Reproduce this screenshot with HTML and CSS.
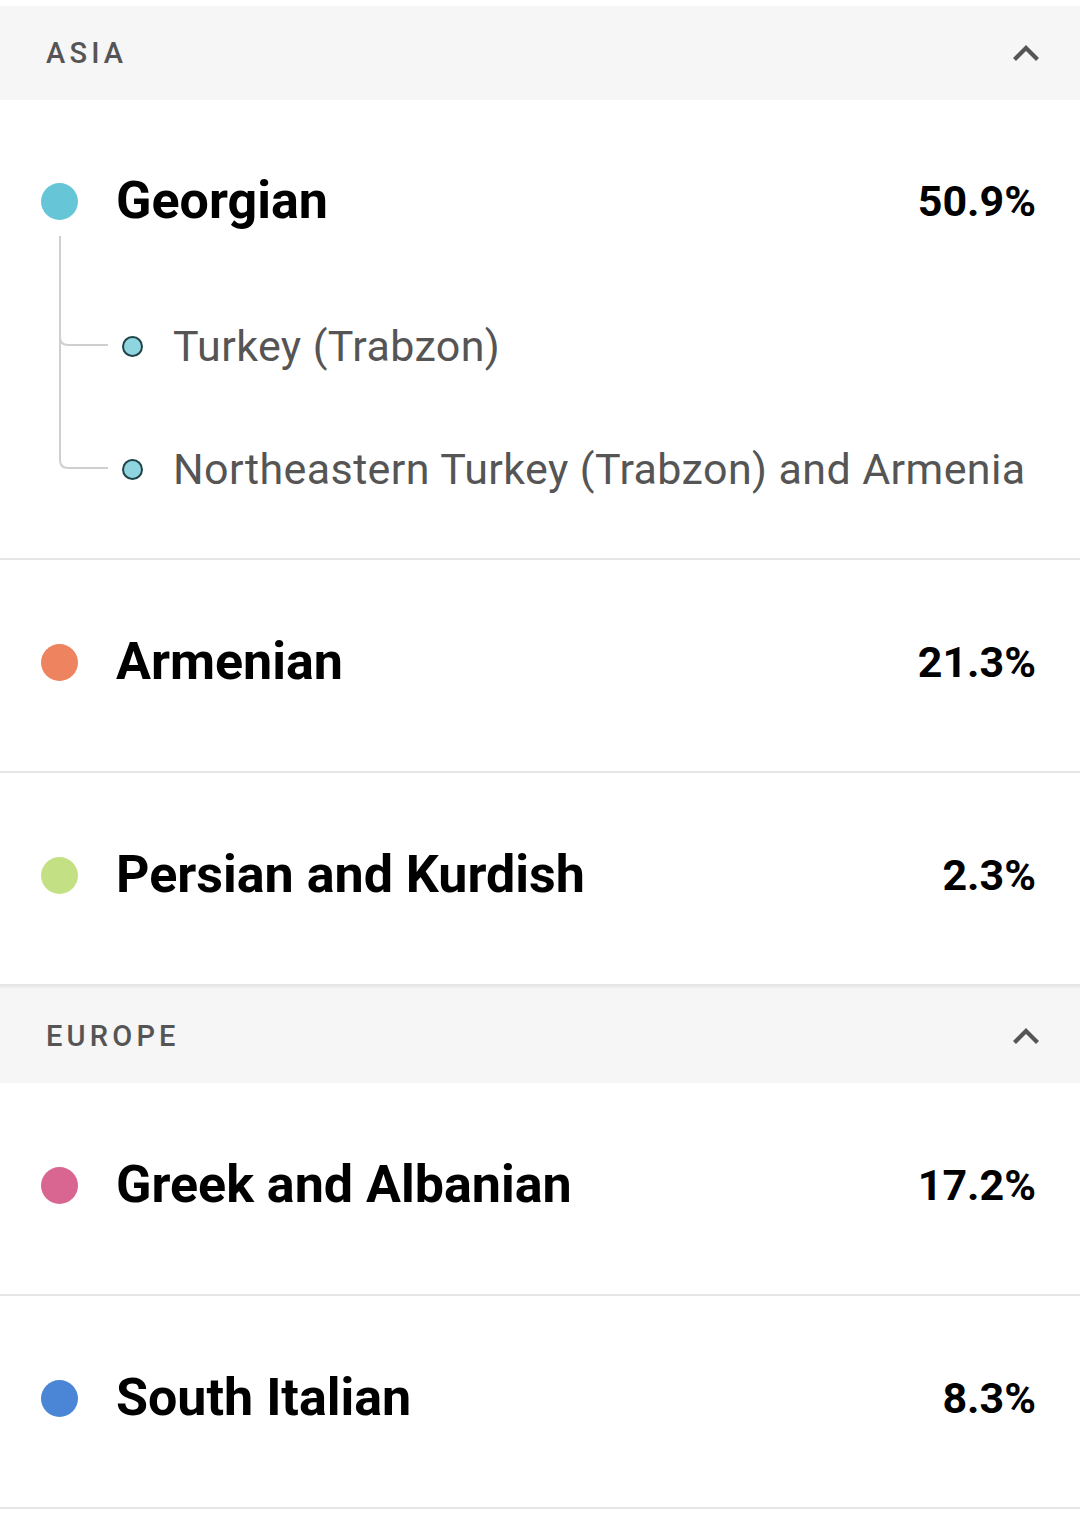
FILE: index.html
```html
<!DOCTYPE html>
<html lang="en">
<head>
<meta charset="utf-8">
<title>Ancestry</title>
<link rel="stylesheet" href="styles.css">
</head>
<body>
<div class="page">
  <section class="region">
    <header class="region-head">
      <span class="region-title">ASIA</span>
      <svg class="chevron" viewBox="0 0 28 18" width="28" height="18"><path d="M2.5 15.5 L14 4 L25.5 15.5" fill="none" stroke="#555" stroke-width="4.2"/></svg>
    </header>
    <div class="row row-tree">
      <div class="main">
        <span class="dot c-georgian"></span>
        <span class="name">Georgian</span>
        <span class="pct">50.9%</span>
      </div>
      <div class="subs">
        <svg class="rail" viewBox="0 0 81 263" width="81" height="263">
          <path d="M19 5 V106 Q19 114 27 114 H67" fill="none" stroke="#cfcfcf" stroke-width="2"/>
          <path d="M19 100 V229 Q19 237 27 237 H67" fill="none" stroke="#cfcfcf" stroke-width="2"/>
        </svg>
        <ul class="sub-list">
          <li class="sub"><span class="subdot"></span><span class="sub-name">Turkey (Trabzon)</span></li>
          <li class="sub"><span class="subdot"></span><span class="sub-name">Northeastern Turkey (Trabzon) and Armenia</span></li>
        </ul>
      </div>
    </div>
    <div class="row">
      <div class="main">
        <span class="dot c-armenian"></span>
        <span class="name">Armenian</span>
        <span class="pct">21.3%</span>
      </div>
    </div>
    <div class="row">
      <div class="main">
        <span class="dot c-persian"></span>
        <span class="name">Persian and Kurdish</span>
        <span class="pct">2.3%</span>
      </div>
    </div>
  </section>
  <section class="region">
    <header class="region-head">
      <span class="region-title">EUROPE</span>
      <svg class="chevron" viewBox="0 0 28 18" width="28" height="18"><path d="M2.5 15.5 L14 4 L25.5 15.5" fill="none" stroke="#555" stroke-width="4.2"/></svg>
    </header>
    <div class="row">
      <div class="main">
        <span class="dot c-greek"></span>
        <span class="name">Greek and Albanian</span>
        <span class="pct">17.2%</span>
      </div>
    </div>
    <div class="row">
      <div class="main">
        <span class="dot c-italian"></span>
        <span class="name">South Italian</span>
        <span class="pct">8.3%</span>
      </div>
    </div>
  </section>
</div>
</body>
</html>
```
FILE: styles.css
```css
* { box-sizing: border-box; }
html, body { margin: 0; padding: 0; background: #fff; }
body { font-family: Roboto, "Liberation Sans", sans-serif; color: #000; }
.page { padding-top: 6px; }

.region-head {
  display: flex;
  align-items: center;
  justify-content: space-between;
  height: 94px;
  padding: 0 40px 0 46px;
  background: #f6f6f6;
}
.region + .region .region-head { border-top: 2px solid #ececec; height: 97px; }
.region-title {
  font-size: 29px;
  font-weight: 500;
  letter-spacing: 4.2px;
  color: #555;
}
.chevron { display: block; }

.row {
  padding: 72px 44px 79px 41px;
  border-bottom: 2px solid #e6e6e6;
}
.row-tree { padding-top: 71px; padding-bottom: 64px; }

.main {
  display: flex;
  align-items: center;
  height: 60px;
}
.dot {
  width: 37px;
  height: 37px;
  border-radius: 50%;
  flex: none;
  margin-right: 38px;
}
.c-georgian { background: #66c6d7; }
.c-armenian { background: #ee835f; }
.c-persian { background: #c3e184; }
.c-greek { background: #d96690; }
.c-italian { background: #4a86d5; }

.name {
  flex: 1;
  font-size: 52px;
  font-weight: 700;
  line-height: 60px;
  color: #000;
}
.pct {
  font-size: 43px;
  font-weight: 700;
  line-height: 60px;
  letter-spacing: 0;
  color: #000;
}

.subs {
  display: flex;
  align-items: flex-start;
}
.rail { display: block; flex: none; }
.sub-list {
  list-style: none;
  margin: 0;
  padding: 90px 0 0 0;
  display: flex;
  flex-direction: column;
  gap: 73px;
}
.sub {
  display: flex;
  align-items: center;
  height: 50px;
}
.subdot {
  width: 21px;
  height: 21px;
  border-radius: 50%;
  background: #8fd5df;
  border: 2.5px solid #1f4348;
  flex: none;
  margin-right: 30px;
}
.sub-name {
  font-size: 43px;
  font-weight: 400;
  line-height: 50px;
  letter-spacing: 0.4px;
  color: #555;
  white-space: nowrap;
}
```
